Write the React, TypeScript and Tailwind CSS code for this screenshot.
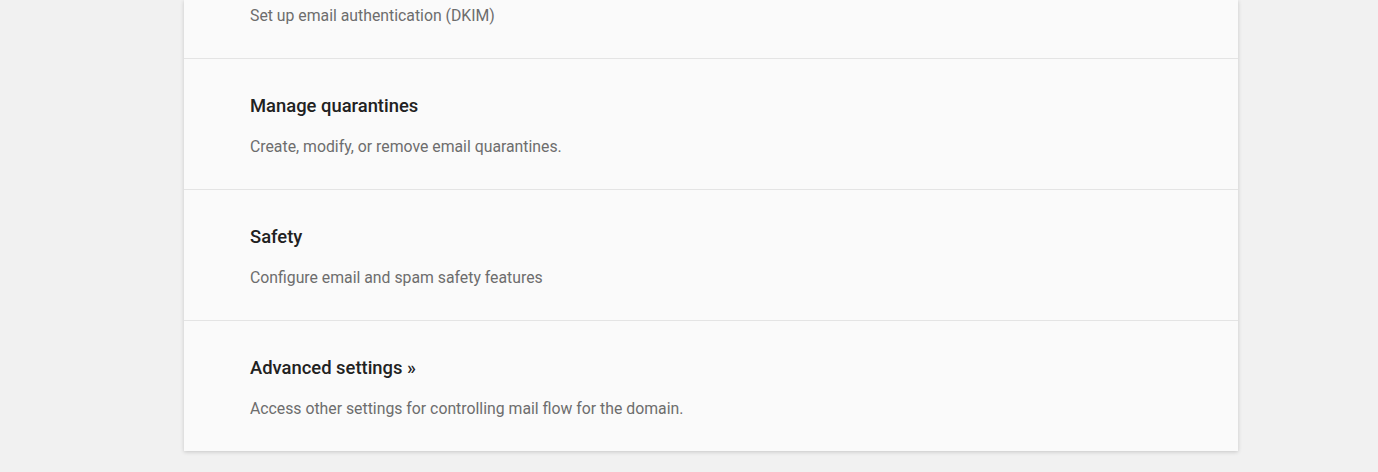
import React from "react";

const sections = [
  { title: "Manage quarantines", desc: "Create, modify, or remove email quarantines." },
  { title: "Safety", desc: "Configure email and spam safety features" },
  { title: "Advanced settings »", desc: "Access other settings for controlling mail flow for the domain." },
];

export default function App() {
  return (
    <div className="min-h-[472px] w-full overflow-hidden bg-[#f1f1f1] pb-[21px]" style={{ fontFamily: "Roboto, 'Liberation Sans', sans-serif" }}>
      <div className="ml-[184px] w-[1054px] bg-[#fafafa] shadow-[0_1px_4px_rgba(0,0,0,0.18)]">
        <div className="pl-[66px] pr-6 pt-[6px] pb-[32px]">
          <div className="h-[20px] text-[15.8px] leading-[20px] text-[#6d6d6d]">Set up email authentication (DKIM)</div>
        </div>
        {sections.map((s, i) => (
          <div key={i} className="border-t border-[#e4e4e4] pl-[66px] pr-6 pt-[35px] pb-[32px]">
            <div className="h-[24px] text-[18.4px] font-medium leading-[24px] text-[#212121]">{s.title}</div>
            <div className="mt-[19px] h-[20px] text-[15.8px] leading-[20px] text-[#6d6d6d]">{s.desc}</div>
          </div>
        ))}
      </div>
    </div>
  );
}
